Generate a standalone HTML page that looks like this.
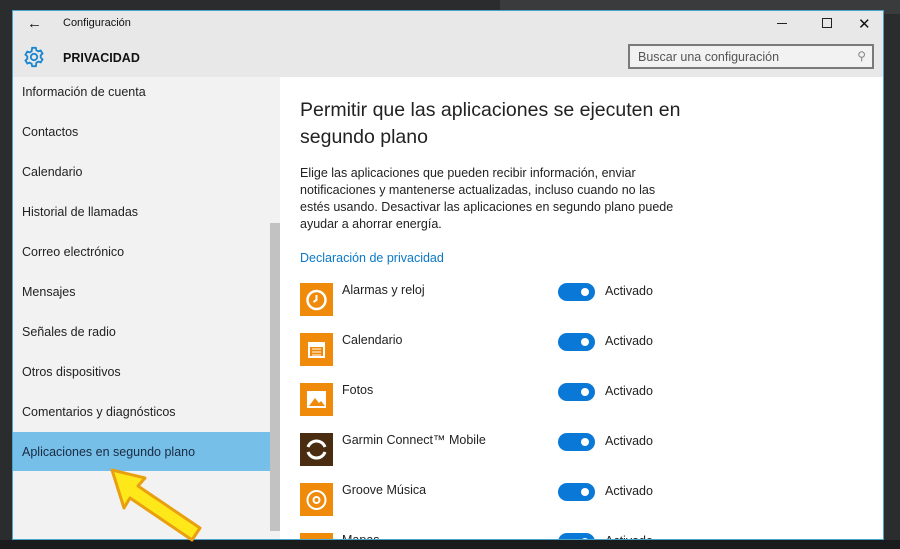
<!DOCTYPE html>
<html><head><meta charset="utf-8"><style>
*{margin:0;padding:0;box-sizing:border-box}
body{width:900px;height:549px;overflow:hidden;background:#2b2c2e;font-family:"Liberation Sans",sans-serif;position:relative}
.bg1{position:absolute;left:500px;top:0;width:400px;height:14px;background:#3a3b3d}
.win{position:absolute;left:12px;top:10px;width:872px;height:530px;border:1px solid #4aa3c8;background:#fff;overflow:hidden}
.hdr{position:absolute;left:0;top:0;width:870px;height:66px;background:#e8e8e8}
.t{position:absolute;font-size:11px;color:#111}
.side{position:absolute;left:0;top:66px;width:267px;height:464px;background:#f2f2f2}
.it{position:absolute;left:9px;font-size:12.5px;color:#222}
.sel{position:absolute;left:0;top:355px;width:257px;height:39px;background:#76bfe9}
.sb{position:absolute;left:257px;top:212px;width:10px;height:308px;background:#c2c2c2}
.main{position:absolute;left:287px;top:66px;width:580px;height:470px}
h1{position:absolute;left:0;top:20px;width:420px;font-weight:normal;font-size:19.5px;line-height:27px;color:#222;white-space:nowrap}
.desc{position:absolute;left:0;top:88px;width:380px;font-size:12.5px;line-height:17px;color:#222}
.link{position:absolute;left:0;top:174px;font-size:12.5px;color:#0a78c8;white-space:nowrap}
.row{position:absolute;left:0;width:380px;height:40px}
.ic{position:absolute;left:0;top:0;width:33px;height:33px;background:#f08a0a}
.nm{position:absolute;left:42px;top:0;font-size:12.5px;color:#222;white-space:nowrap}
.tg{position:absolute;left:258px;top:0px;width:37px;height:18px;border-radius:9px;background:#0a78d7}
.tg:after{content:"";position:absolute;right:6px;top:5px;width:8px;height:8px;border-radius:50%;background:#fff}
.ac{position:absolute;left:305px;top:1px;font-size:12.5px;color:#222}
</style></head><body>
<div class="bg1"></div>
<div class="win">
 <div class="hdr">
  <div class="t" style="left:14px;top:4px;font-size:15px">&#8592;</div>
  <div class="t" style="left:50px;top:6px">Configuración</div>
  <svg style="position:absolute;left:10px;top:35px" width="22" height="22" viewBox="0 0 24 24"><path fill="none" stroke="#1a86d0" stroke-width="2" d="M10 2h4l.6 2.6 2.2 1.2 2.5-.9 2 3.4-2 1.8v2.6l2 1.8-2 3.4-2.5-.9-2.2 1.2L14 22h-4l-.6-2.6-2.2-1.2-2.5.9-2-3.4 2-1.8v-2.6l-2-1.8 2-3.4 2.5.9 2.2-1.2z"/><circle cx="12" cy="12" r="3.5" fill="none" stroke="#1a86d0" stroke-width="2"/></svg>
  <div class="t" style="left:50px;top:40px;font-size:12.5px;font-weight:bold;color:#111">PRIVACIDAD</div>
  <div style="position:absolute;left:764px;top:12px;width:10px;border-top:1px solid #222"></div>
  <div style="position:absolute;left:809px;top:7px;width:10px;height:10px;border:1px solid #222"></div>
  <div class="t" style="left:845px;top:4px;font-size:15px">&#10005;</div>
  <div style="position:absolute;left:615px;top:33px;width:246px;height:25px;border:2px solid #7a7a7a;background:#f2f2f2">
   <div class="t" style="left:8px;top:4px;font-size:12.5px;color:#555">Buscar una configuración</div>
   <div class="t" style="right:6px;top:3px;color:#888;font-size:12px">&#9906;</div>
  </div>
 </div>
 <div class="side">
  <div class="sel"></div>
  <div class="it" style="top:8px">Información de cuenta</div>
  <div class="it" style="top:48px">Contactos</div>
  <div class="it" style="top:88px">Calendario</div>
  <div class="it" style="top:128px">Historial de llamadas</div>
  <div class="it" style="top:168px">Correo electrónico</div>
  <div class="it" style="top:208px">Mensajes</div>
  <div class="it" style="top:248px">Señales de radio</div>
  <div class="it" style="top:288px">Otros dispositivos</div>
  <div class="it" style="top:328px">Comentarios y diagnósticos</div>
  <div class="it" style="top:368px;color:#1a2a40">Aplicaciones en segundo plano</div>
 </div>
 <div class="sb"></div>
 <div class="main">
  <h1>Permitir que las aplicaciones se ejecuten en<br>segundo plano</h1>
  <div class="desc">Elige las aplicaciones que pueden recibir información, enviar notificaciones y mantenerse actualizadas, incluso cuando no las estés usando. Desactivar las aplicaciones en segundo plano puede ayudar a ahorrar energía.</div>
  <div class="link">Declaración de privacidad</div>
  <div class="row" style="top:206px"><div class="ic"><svg width="33" height="33"><circle cx="16.5" cy="17" r="9" fill="none" stroke="#fff" stroke-width="2.5"/><path d="M16.5 12v5l-3 2" stroke="#fff" stroke-width="2" fill="none"/></svg></div><div class="nm">Alarmas y reloj</div><div class="tg"></div><div class="ac">Activado</div></div>
  <div class="row" style="top:256px"><div class="ic"><svg width="33" height="33"><rect x="8" y="9" width="17" height="16" fill="#fff"/><rect x="10" y="14" width="13" height="9" fill="#f08a0a"/><path d="M12 16h9M12 19h9M12 22h9" stroke="#fff" stroke-width="1"/></svg></div><div class="nm">Calendario</div><div class="tg"></div><div class="ac">Activado</div></div>
  <div class="row" style="top:306px"><div class="ic"><svg width="33" height="33"><rect x="7" y="8" width="19" height="17" fill="#fff"/><path d="M9 23l6-8 4 5 2-2 4 5z" fill="#f08a0a"/></svg></div><div class="nm">Fotos</div><div class="tg"></div><div class="ac">Activado</div></div>
  <div class="row" style="top:356px"><div class="ic" style="background:#4a2c10"><svg width="33" height="33"><path d="M8 14a9 9 0 0 1 17 0M8 19a9 9 0 0 0 17 0" stroke="#fff" stroke-width="3" fill="none"/></svg></div><div class="nm">Garmin Connect™ Mobile</div><div class="tg"></div><div class="ac">Activado</div></div>
  <div class="row" style="top:406px"><div class="ic"><svg width="33" height="33"><circle cx="16.5" cy="17" r="9" fill="none" stroke="#fff" stroke-width="2"/><circle cx="16.5" cy="17" r="3" fill="none" stroke="#fff" stroke-width="2"/></svg></div><div class="nm">Groove Música</div><div class="tg"></div><div class="ac">Activado</div></div>
  <div class="row" style="top:456px"><div class="ic"></div><div class="nm">Mapas</div><div class="tg"></div><div class="ac">Activado</div></div>
 </div>
</div>
<div style="position:absolute;left:0;top:540px;width:900px;height:9px;background:#1a1b1d"></div>
<svg style="position:absolute;left:100px;top:460px" width="110" height="85" viewBox="0 0 110 85"><path d="M12 10 L45 18 L38 26 L100 68 L92 80 L30 38 L24 48 Z" fill="#ffe81a" stroke="#e8a010" stroke-width="3" stroke-linejoin="round"/></svg>
</body></html>
